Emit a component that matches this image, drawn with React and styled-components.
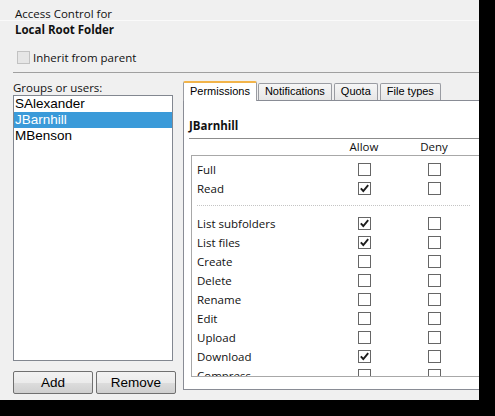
import styled, { createGlobalStyle } from "styled-components";

const GlobalStyle = createGlobalStyle`
	html, body {
		margin: 0;
		padding: 0;
		background: #000;
	}
	* {
		box-sizing: border-box;
	}
`;

const ui = `"Open Sans", "Noto Sans", sans-serif`;
const classic = `"Liberation Sans", Arial, sans-serif`;

const users = ["SAlexander", "JBarnhill", "MBenson"];
const tabs = ["Permissions", "Notifications", "Quota", "File types"];

// null = dotted separator between the two groups
const perms = [
	{ name: "Full", allow: false },
	{ name: "Read", allow: true },
	null,
	{ name: "List subfolders", allow: true },
	{ name: "List files", allow: true },
	{ name: "Create", allow: false },
	{ name: "Delete", allow: false },
	{ name: "Rename", allow: false },
	{ name: "Edit", allow: false },
	{ name: "Upload", allow: false },
	{ name: "Download", allow: true },
	{ name: "Compress", allow: false },
];

const Check = ({ checked }) => (
	<Box>
		{checked && (
			<svg width="11" height="11" viewBox="0 0 11 11">
				<path d="M1.8 5.4 L4.3 8 L9.2 2.2" fill="none" stroke="#1c1c1c" strokeWidth="1.9" />
			</svg>
		)}
	</Box>
);

const App = () => {
	const selected = "JBarnhill";
	return (
		<>
			<GlobalStyle />
			<Window>
				<Head>
					<Caption>Access Control for</Caption>
					<Subject>Local Root Folder</Subject>
					<Inherit>
						<DisabledBox />
						Inherit from parent
					</Inherit>
				</Head>
				<Divider />
				<Body>
					<Left>
						<Label>Groups or users:</Label>
						<UserList>
							{users.map((u) => (
								<UserItem key={u} active={u === selected}>
									{u}
								</UserItem>
							))}
						</UserList>
						<Buttons>
							<Button>Add</Button>
							<Button>Remove</Button>
						</Buttons>
					</Left>
					<Right>
						<TabStrip>
							{tabs.map((t, i) => (
								<Tab key={t} active={i === 0}>
									{t}
								</Tab>
							))}
						</TabStrip>
						<Panel>
							<PanelTitle>{selected}</PanelTitle>
							<ColumnHead>
								<span />
								<HeadCell>Allow</HeadCell>
								<HeadCell>Deny</HeadCell>
							</ColumnHead>
							<PermBox>
								{perms.map((p, i) =>
									p ? (
										<PermRow key={p.name}>
											<span>{p.name}</span>
											<Cell>
												<Check checked={p.allow} />
											</Cell>
											<Cell>
												<Check checked={false} />
											</Cell>
										</PermRow>
									) : (
										<Separator key={"sep" + i} />
									)
								)}
							</PermBox>
						</Panel>
					</Right>
				</Body>
			</Window>
		</>
	);
};

const Window = styled.div`
	width: 479px;
	height: 400px;
	background: #f0f0f0;
	overflow: hidden;
	display: flex;
	flex-direction: column;
	font-family: ${ui};
	font-size: 11.5px;
	color: #111;
`;
const Head = styled.div`
	padding-left: 15px;
`;
const Caption = styled.div`
	height: 21px;
	padding-top: 8px;
	line-height: 12px;
	border-bottom: 1px solid #fafafa;
	margin-left: -15px;
	padding-left: 15px;
`;
const Subject = styled.div`
	height: 17px;
	line-height: 17px;
	font-weight: 700;
`;
const Inherit = styled.div`
	margin-top: 12px;
	height: 15px;
	display: flex;
	align-items: center;
	gap: 3px;
	padding-left: 2px;
	line-height: 15px;
`;
const DisabledBox = styled.span`
	width: 13px;
	height: 13px;
	border: 1px solid #c2c2c2;
	background: #e6e6e6;
`;
const Divider = styled.div`
	margin: 7px 0 0 13px;
	border-top: 1px solid #a0a0a0;
`;
const Body = styled.div`
	display: flex;
	gap: 7px;
	margin: 8px 0 0 13px;
`;
const Left = styled.div`
	width: 163px;
	flex: none;
	display: flex;
	flex-direction: column;
`;
const Label = styled.div`
	height: 14px;
	line-height: 14px;
`;
const UserList = styled.div`
	width: 160px;
	height: 266px;
	background: #fff;
	border: 1px solid #828790;
	font-family: ${classic};
	font-size: 13.5px;
`;
const UserItem = styled.div`
	height: 16px;
	line-height: 16px;
	padding-left: 1px;
	background: ${(p) => (p.active ? "#3a9ad9" : "transparent")};
	color: ${(p) => (p.active ? "#fff" : "#000")};
`;
const Buttons = styled.div`
	display: flex;
	gap: 3px;
	margin-top: 10px;
`;
const Button = styled.button`
	width: 80px;
	height: 23px;
	padding: 0;
	border: 1px solid #707070;
	border-radius: 2px;
	background: linear-gradient(#f2f2f2 0%, #ebebeb 50%, #dddddd 51%, #cfcfcf 100%);
	font-family: ${classic};
	font-size: 13.5px;
	color: #000;
`;
const Right = styled.div`
	width: 330px;
	flex: none;
	display: flex;
	flex-direction: column;
`;
const TabStrip = styled.div`
	height: 19px;
	display: flex;
	align-items: flex-end;
	gap: 2px;
`;
const Tab = styled.div`
	position: relative;
	z-index: ${(p) => (p.active ? 1 : 0)};
	height: ${(p) => (p.active ? "20px" : "17px")};
	margin-bottom: ${(p) => (p.active ? "-1px" : "0")};
	margin-right: ${(p) => (p.active ? "-1px" : "0")};
	padding: 0 6px;
	border: 1px solid #9a9ca2;
	border-bottom: none;
	border-top: ${(p) => (p.active ? "2px solid #f2b44a" : "1px solid #9a9ca2")};
	border-radius: 2px 2px 0 0;
	background: ${(p) => (p.active ? "#fff" : "linear-gradient(#f6f6f6, #e6e6e6)")};
	font-family: ${classic};
	font-size: 11px;
	line-height: ${(p) => (p.active ? "17px" : "15px")};
	color: #000;
`;
const Panel = styled.div`
	height: 290px;
	background: #fff;
	border: 1px solid #898c95;
	padding: 0 0 12px 6px;
	display: flex;
	flex-direction: column;
`;
const PanelTitle = styled.div`
	height: 38px;
	padding-top: 17px;
	line-height: 16px;
	font-weight: 700;
	border-bottom: 1px solid #8c8c8c;
	margin-left: -1px;
`;
const grid = `
	display: grid;
	grid-template-columns: 132px 70px 70px;
	align-items: center;
`;
const ColumnHead = styled.div`
	${grid}
	height: 16px;
	padding-left: 7px;
	line-height: 16px;
`;
const HeadCell = styled.span`
	text-align: center;
`;
const PermBox = styled.div`
	height: 222px;
	margin-left: 1px;
	padding-top: 4px;
	background: #fff;
	border: 1px solid #a8a8a8;
	border-right: none;
	overflow: hidden;
`;
const PermRow = styled.div`
	${grid}
	height: 19px;
	padding-left: 5px;
	line-height: 19px;
`;
const Cell = styled.span`
	display: flex;
	justify-content: center;
`;
const Box = styled.span`
	width: 13px;
	height: 13px;
	border: 1px solid #666;
	background: #fff;
	display: flex;
	align-items: center;
	justify-content: center;
`;
const Separator = styled.div`
	margin: 7px 8px 8px 5px;
	width: 273px;
	border-top: 1px dotted #c4c4c4;
`;

export default App;
